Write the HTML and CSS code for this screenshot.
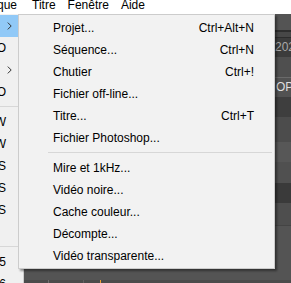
FILE: index.html
```html
<!DOCTYPE html>
<html lang="fr">
<head>
  <meta charset="UTF-8">
  <meta name="viewport" content="width=device-width, initial-scale=1.0" />
  <title>Fichier &gt; Nouveau</title>
  <link rel="stylesheet" href="styles.css">
</head>
<body>
  <div class="menubar">
    <span class="menubar-item menubar-first">que</span>
    <span class="menubar-item">Titre</span>
    <span class="menubar-item">Fenêtre</span>
    <span class="menubar-item">Aide</span>
  </div>

  <div class="workspace">
    <ul class="parent-menu">
      <li class="parent-item active">
        <span class="parent-key"></span>
        <svg class="chevron" width="5" height="8" viewBox="0 0 5 8"><polyline points="0.8,0.6 4.2,4 0.8,7.4" /></svg>
      </li>
      <li class="parent-item"><span class="parent-key">Ctrl+O</span></li>
      <li class="parent-item">
        <span class="parent-key"></span>
        <svg class="chevron" width="5" height="8" viewBox="0 0 5 8"><polyline points="0.8,0.6 4.2,4 0.8,7.4" /></svg>
      </li>
      <li class="parent-item"><span class="parent-key">Ctrl+Alt+O</span></li>
      <li class="parent-sep"></li>
      <li class="parent-item"><span class="parent-key">Ctrl+W</span></li>
      <li class="parent-item"><span class="parent-key">Ctrl+Maj+W</span></li>
      <li class="parent-item"><span class="parent-key">Ctrl+S</span></li>
      <li class="parent-item"><span class="parent-key">Ctrl+Maj+S</span></li>
      <li class="parent-item"><span class="parent-key">Ctrl+Alt+S</span></li>
      <li class="parent-item"><span class="parent-key"></span></li>
      <li class="parent-sep"></li>
      <li class="parent-item"><span class="parent-key">F5</span></li>
      <li class="parent-item"><span class="parent-key">F6</span></li>
    </ul>

    <div class="app">
      <div class="band band-1"></div>
      <div class="band band-2"></div>
      <div class="band band-3"></div>
      <div class="band band-4"><span class="field-text">2020</span></div>
      <div class="band band-5"></div>
      <div class="band band-6"></div>
      <div class="band band-7"><span class="panel-title">OPTIONS</span></div>
      <div class="band band-8"></div>
      <div class="band band-9"></div>
      <div class="band band-10"></div>
      <div class="band band-11"></div>
      <div class="band band-12"></div>
      <div class="band band-13"></div>
      <div class="band band-14"></div>
      <div class="band band-15"></div>
      <div class="timeline">
        <span class="clip"></span>
        <span class="tick tick-a"></span>
        <span class="tick tick-b"></span>
        <span class="playhead"></span>
      </div>
    </div>

    <ul class="submenu">
      <li class="menu-item"><span>Projet...</span><span>Ctrl+Alt+N</span></li>
      <li class="menu-item"><span>Séquence...</span><span>Ctrl+N</span></li>
      <li class="menu-item"><span>Chutier</span><span>Ctrl+!</span></li>
      <li class="menu-item"><span>Fichier off-line...</span></li>
      <li class="menu-item"><span>Titre...</span><span>Ctrl+T</span></li>
      <li class="menu-item"><span>Fichier Photoshop...</span></li>
      <li class="menu-sep"></li>
      <li class="menu-item"><span>Mire et 1kHz...</span></li>
      <li class="menu-item"><span>Vidéo noire...</span></li>
      <li class="menu-item"><span>Cache couleur...</span></li>
      <li class="menu-item"><span>Décompte...</span></li>
      <li class="menu-item"><span>Vidéo transparente...</span></li>
    </ul>
  </div>
</body>
</html>
```

FILE: styles.css
```css
:root {
  font-family: "Liberation Sans", Arial, sans-serif;
  font-size: 12px;
  --menu-bg: #f2f2f2;
  --menu-border: #cccccc;
  --hover: #91c9f7;
}
* {
  box-sizing: border-box;
}
body {
  margin: 0;
  width: 291px;
  height: 283px;
  overflow: hidden;
  background: #4f4f4f;
  color: #000;
}
ul {
  list-style: none;
  margin: 0;
  padding: 0;
}

/* barre de menus */
.menubar {
  display: flex;
  align-items: flex-start;
  gap: 12px;
  height: 14px;
  line-height: 11px;
  background: #fff;
  white-space: nowrap;
}
.menubar-first {
  margin-left: -3px;
  margin-right: 3px;
}

/* zone sous la barre */
.workspace {
  position: relative;
  display: grid;
  grid-template-columns: 24px 1fr;
  height: 269px;
}

/* menu Fichier (parent), coupé par le bord gauche */
.parent-menu {
  background: #f0f0f0;
  border-right: 1px solid var(--menu-border);
  padding-top: 1px;
}
.parent-item {
  display: flex;
  align-items: center;
  height: 22px;
}
.parent-item.active {
  background: var(--hover);
}
.parent-key {
  display: flex;
  justify-content: flex-end;
  width: 6px;
  white-space: nowrap;
}
.chevron {
  margin-left: 1px;
  fill: none;
  stroke: #333;
  stroke-width: 1;
}
.parent-sep {
  height: 8px;
  padding-top: 3px;
}
.parent-sep::before {
  content: "";
  display: block;
  height: 1px;
  background: #d7d7d7;
}

/* fond de l'application */
.app {
  display: flex;
  flex-direction: column;
  overflow: hidden;
  white-space: nowrap;
}
.band { flex: none; }
.band-1 { height: 16px; background: #545454; }
.band-2 { height: 2px; background: #2e2e2e; }
.band-3 { height: 5px; background: #474747; }
.band-4 {
  height: 20px;
  background: #3c3c3c;
  border-top: 1px solid #2c2c2c;
  padding-left: 251px;
  line-height: 19px;
}
.band-5 { height: 20px; background: #4f4f4f; }
.band-6 { height: 1px; background: #6a6a6a; }
.band-7 {
  height: 19px;
  background: #525252;
  padding-left: 252px;
  line-height: 19px;
}
.band-8 { height: 20px; background: #3e3e3e; }
.band-9 { height: 25px; background: #4c4c4c; }
.band-10 { height: 20px; background: #575757; }
.band-11 { height: 21px; background: #505050; }
.band-12 { height: 20px; background: #3a3a3a; }
.band-13 { height: 22px; background: #4e4e4e; }
.band-14 { height: 1px; background: #444; }
.band-15 { flex: 1; background: #545454; }
.field-text {
  color: #a8a8a8;
}
.panel-title {
  color: #dedede;
}
.timeline {
  display: flex;
  height: 15px;
  background: #4b4b4b;
}
.clip {
  width: 8px;
  margin-top: 4px;
  background: #9a9a9a;
  border-left: 2px solid #d8d8d8;
}
.tick {
  width: 1px;
  background: #6f6f6f;
}
.tick-a { margin-left: 16px; }
.tick-b { margin-left: 34px; background: #606060; }
.playhead {
  width: 1px;
  margin-left: 16px;
  background: #f0a030;
}

/* sous-menu Nouveau */
.submenu {
  position: absolute;
  left: 18px;
  top: 0;
  width: 257px;
  background: var(--menu-bg);
  border: 1px solid var(--menu-border);
  padding: 2px 0 1px;
  box-shadow: 2px 2px 2px rgba(0, 0, 0, 0.4);
}
.menu-item {
  display: flex;
  align-items: center;
  justify-content: space-between;
  height: 22px;
  padding: 0 20px 0 34px;
  white-space: nowrap;
}
.menu-sep {
  height: 1px;
  margin: 3px 2px 4px 29px;
  background: #d7d7d7;
}
```
